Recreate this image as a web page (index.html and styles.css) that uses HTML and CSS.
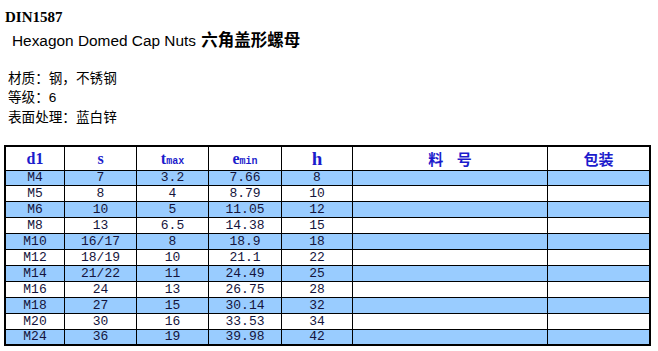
FILE: index.html
```html
<!DOCTYPE html>
<html>
<head>
<meta charset="utf-8">
<link rel="stylesheet" href="styles.css">
</head>
<body>
<div class="code">DIN1587</div>
<div class="title">Hexagon Domed Cap Nuts <b class="cn">六角盖形螺母</b></div>
<div class="specs">
  <div>材质：钢，不锈钢</div>
  <div>等级：<span class="num">6</span></div>
  <div>表面处理：蓝白锌</div>
</div>
<table class="grid">
  <colgroup>
    <col class="c1"><col class="c2"><col class="c3"><col class="c4"><col class="c5"><col class="c6"><col class="c7">
  </colgroup>
  <thead>
    <tr>
      <th>d1</th><th>s</th><th>t<span class="sub">max</span></th><th>e<span class="sub">min</span></th><th class="big">h</th><th class="cnh">料&nbsp;&nbsp;&nbsp;&nbsp;号</th><th class="cnh">包装</th>
    </tr>
  </thead>
  <tbody>
    <tr class="alt"><td>M4</td><td>7</td><td>3.2</td><td>7.66</td><td>8</td><td></td><td></td></tr>
    <tr><td>M5</td><td>8</td><td>4</td><td>8.79</td><td>10</td><td></td><td></td></tr>
    <tr class="alt"><td>M6</td><td>10</td><td>5</td><td>11.05</td><td>12</td><td></td><td></td></tr>
    <tr><td>M8</td><td>13</td><td>6.5</td><td>14.38</td><td>15</td><td></td><td></td></tr>
    <tr class="alt"><td>M10</td><td>16/17</td><td>8</td><td>18.9</td><td>18</td><td></td><td></td></tr>
    <tr><td>M12</td><td>18/19</td><td>10</td><td>21.1</td><td>22</td><td></td><td></td></tr>
    <tr class="alt"><td>M14</td><td>21/22</td><td>11</td><td>24.49</td><td>25</td><td></td><td></td></tr>
    <tr><td>M16</td><td>24</td><td>13</td><td>26.75</td><td>28</td><td></td><td></td></tr>
    <tr class="alt"><td>M18</td><td>27</td><td>15</td><td>30.14</td><td>32</td><td></td><td></td></tr>
    <tr><td>M20</td><td>30</td><td>16</td><td>33.53</td><td>34</td><td></td><td></td></tr>
    <tr class="alt"><td>M24</td><td>36</td><td>19</td><td>39.98</td><td>42</td><td></td><td></td></tr>
  </tbody>
</table>
</body>
</html>
```
FILE: styles.css
```css
html, body {
  margin: 0;
  background: #fff;
}
body {
  padding: 8px 0 0 4px;
  color: #000;
  font-family: "Liberation Sans", "Noto Sans CJK SC", sans-serif;
}
.code {
  font: bold 15px/18px "Liberation Serif", serif;
  padding-left: 1px;
}
.title {
  margin-top: 2px;
  padding-left: 8px;
  font: 15.4px/22px "Liberation Sans", "Noto Sans CJK SC", sans-serif;
}
.cn {
  font-family: "Noto Sans CJK SC", sans-serif;
  font-size: 16.5px;
  font-weight: 700;
  margin-left: 1px;
}
.specs {
  margin-top: 16px;
  padding-left: 4px;
  font: 13.6px/19px "Noto Sans CJK SC", sans-serif;
}
.num {
  font-family: "Liberation Sans", sans-serif;
}
.grid {
  margin-top: 19px;
  border-collapse: separate;
  border-spacing: 0;
  border: 2px solid #000;
  table-layout: fixed;
  width: 647px;
}
.c1 { width: 59px; }
.c2 { width: 72px; }
.c3 { width: 72px; }
.c4 { width: 73px; }
.c5 { width: 71px; }
.c6 { width: 195px; }
.c7 { width: 101px; }
.grid th, .grid td {
  box-sizing: border-box;
  padding: 0;
  border-right: 1px solid #000;
  border-bottom: 1px solid #000;
  text-align: center;
}
.grid th:last-child, .grid td:last-child {
  border-right: none;
}
.grid tbody tr:last-child td {
  border-bottom: none;
}
.grid th {
  height: 24px;
  color: #1c1ccc;
  font: bold 16px/20px "Liberation Serif", serif;
  vertical-align: middle;
}
.grid th.big {
  font-size: 19px;
}
.grid th .sub {
  font: bold 10px "Liberation Mono", monospace;
}
.grid th.cnh {
  font: bold 15px/20px "Noto Sans CJK SC", sans-serif;
}
.grid td {
  height: 16px;
  font: 13px/14px "Liberation Mono", monospace;
  color: #14143c;
  vertical-align: middle;
}
.grid tbody tr:first-child td {
  height: 15px;
}
.grid tbody tr:last-child td {
  height: 14px;
}
.grid tr.alt td {
  background: #99ccff;
}
```
